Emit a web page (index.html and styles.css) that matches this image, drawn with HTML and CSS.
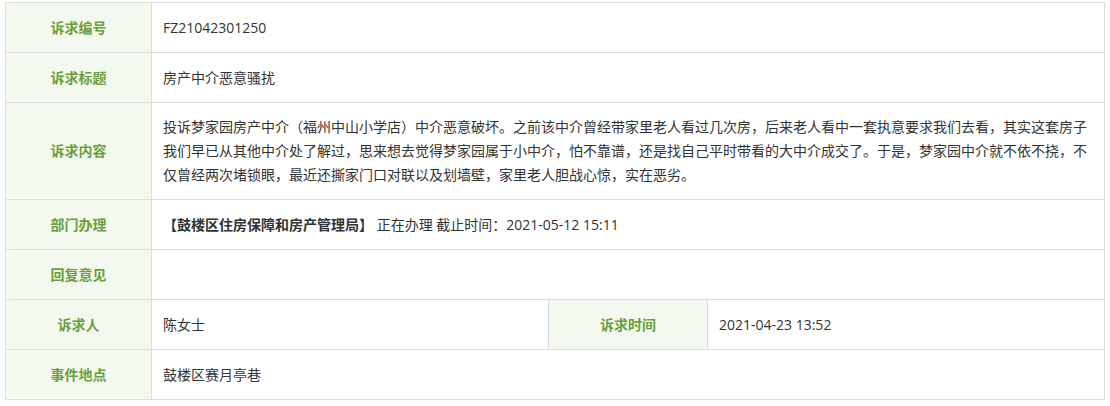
FILE: index.html
```html
<!DOCTYPE html>
<html lang="zh-CN">
<head>
<meta charset="utf-8">
<title>诉求详情</title>
<link rel="stylesheet" href="styles.css">
</head>
<body>
<table class="detail">
  <colgroup>
    <col class="c-label1">
    <col class="c-val1">
    <col class="c-label2">
    <col class="c-val2">
  </colgroup>
  <tr class="row">
    <th>诉求编号</th>
    <td colspan="3">FZ21042301250</td>
  </tr>
  <tr class="row">
    <th>诉求标题</th>
    <td colspan="3">房产中介恶意骚扰</td>
  </tr>
  <tr class="row">
    <th>诉求内容</th>
    <td colspan="3" class="content">投诉梦家园房产中介（福州中山小学店）中介恶意破坏。之前该中介曾经带家里老人看过几次房，后来老人看中一套执意要求我们去看，其实这套房子我们早已从其他中介处了解过，思来想去觉得梦家园属于小中介，怕不靠谱，还是找自己平时带看的大中介成交了。于是，梦家园中介就不依不挠，不仅曾经两次堵锁眼，最近还撕家门口对联以及划墙壁，家里老人胆战心惊，实在恶劣。</td>
  </tr>
  <tr class="row">
    <th>部门办理</th>
    <td colspan="3"><strong class="dept">【鼓楼区住房保障和房产管理局】</strong> 正在办理 截止时间：2021-05-12 15:11</td>
  </tr>
  <tr class="row">
    <th>回复意见</th>
    <td colspan="3"></td>
  </tr>
  <tr class="row">
    <th>诉求人</th>
    <td>陈女士</td>
    <th>诉求时间</th>
    <td>2021-04-23 13:52</td>
  </tr>
  <tr class="row">
    <th>事件地点</th>
    <td colspan="3">鼓楼区赛月亭巷</td>
  </tr>
</table>
</body>
</html>
```

FILE: styles.css
```css
html, body {
  margin: 0;
  padding: 0;
  background: #ffffff;
}

body {
  padding: 2px 5px;
  font-family: "Open Sans", "Noto Sans CJK SC", "Microsoft YaHei", sans-serif;
  font-size: 14px;
  color: #333333;
}

.detail {
  border-collapse: collapse;
  table-layout: fixed;
  width: 1099px;
}

.c-label1 { width: 146px; }
.c-val1 { width: 397px; }
.c-label2 { width: 159px; }
.c-val2 { width: 397px; }

.detail th,
.detail td {
  border: 1px solid #dedede;
  line-height: 24px;
  height: 50px;
  box-sizing: border-box;
  vertical-align: middle;
}

.detail th {
  background: #f3f9ee;
  color: #6b9e3c;
  font-weight: bold;
  text-align: center;
  padding: 12px 6px;
}

.detail td {
  text-align: left;
  padding: 12px 11px;
  word-break: break-all;
}

.detail td.content {
  padding: 12px 11px;
}

.dept {
  font-weight: bold;
  color: #333333;
}
```
